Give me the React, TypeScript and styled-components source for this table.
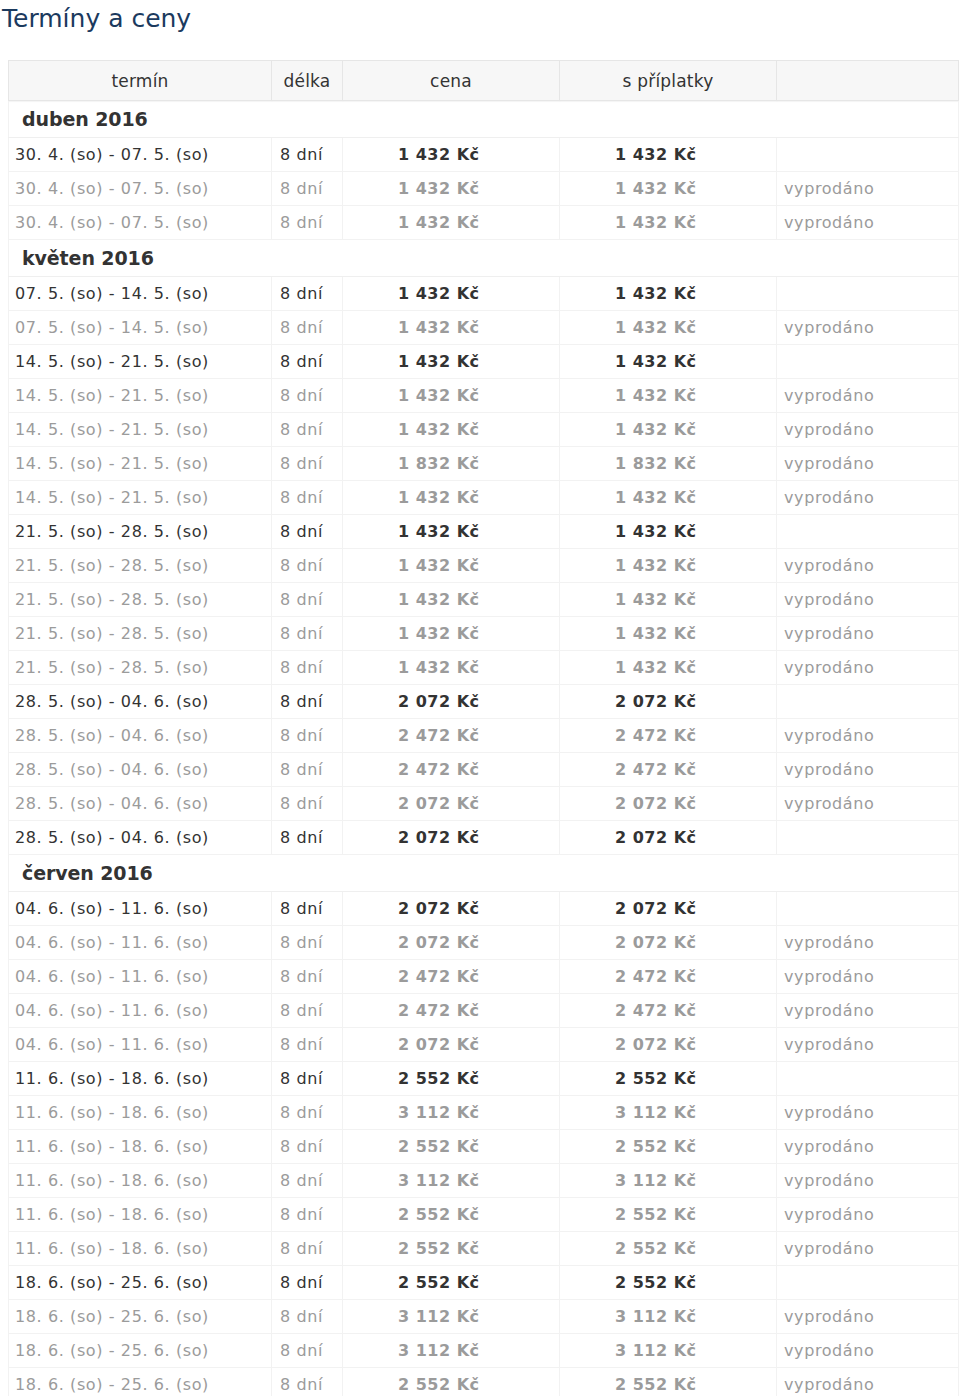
import React from "react";
import styled, { createGlobalStyle } from "styled-components";

const GlobalStyle = createGlobalStyle`
  body {
    margin: 0;
    background: #fff;
    font-family: "DejaVu Sans", Verdana, sans-serif;
  }
`;

const Page = styled.div`
  padding: 0 0 20px;
`;

const Title = styled.h2`
  margin: 0;
  padding-left: 2px;
  height: 37px;
  line-height: 37px;
  font-size: 25px;
  font-weight: normal;
  color: #1b3a5e;
`;

const Table = styled.table`
  margin: 23px 0 0 8px;
  width: 950px;
  border-collapse: collapse;
  table-layout: fixed;
  font-size: 16px;
  letter-spacing: 0.6px;
`;

const HeadCell = styled.th<{ $w: number }>`
  width: ${(p) => p.$w}px;
  height: 40px;
  padding: 0;
  box-sizing: border-box;
  background: #f7f7f7;
  border: 1px solid #e6e6e6;
  box-shadow: 0 1px 1px rgba(0, 0, 0, 0.04);
  font-size: 17px;
  font-weight: normal;
  letter-spacing: 0.2px;
  color: #333;
  text-align: center;
`;

const MonthCell = styled.td`
  height: 37px;
  padding: 0 0 0 13px;
  box-sizing: border-box;
  border-left: 1px solid #f2f2f2;
  border-right: 1px solid #f2f2f2;
  border-bottom: 1px solid #efefef;
  font-size: 19px;
  font-weight: bold;
  letter-spacing: -0.1px;
  color: #333;
`;

const Row = styled.tr<{ $sold: boolean }>`
  color: ${(p) => (p.$sold ? "#9b9b9b" : "#333")};
`;

const Cell = styled.td<{ $pad?: number; $bold?: boolean }>`
  height: 34px;
  padding: 0 0 0 ${(p) => p.$pad ?? 8}px;
  box-sizing: border-box;
  border: 1px solid #f2f2f2;
  white-space: nowrap;
  font-weight: ${(p) => (p.$bold ? "bold" : "normal")};
  letter-spacing: ${(p) => (p.$bold ? "0.5px" : "inherit")};
`;

type Term = { from: string; to: string; price: number; sold: boolean };
type Month = { name: string; terms: Term[] };

const t = (from: string, to: string, price: number, sold: boolean): Term => ({
  from,
  to,
  price,
  sold,
});

const months: Month[] = [
  {
    name: "duben 2016",
    terms: [
      t("30. 4.", "07. 5.", 1432, false),
      t("30. 4.", "07. 5.", 1432, true),
      t("30. 4.", "07. 5.", 1432, true),
    ],
  },
  {
    name: "květen 2016",
    terms: [
      t("07. 5.", "14. 5.", 1432, false),
      t("07. 5.", "14. 5.", 1432, true),
      t("14. 5.", "21. 5.", 1432, false),
      t("14. 5.", "21. 5.", 1432, true),
      t("14. 5.", "21. 5.", 1432, true),
      t("14. 5.", "21. 5.", 1832, true),
      t("14. 5.", "21. 5.", 1432, true),
      t("21. 5.", "28. 5.", 1432, false),
      t("21. 5.", "28. 5.", 1432, true),
      t("21. 5.", "28. 5.", 1432, true),
      t("21. 5.", "28. 5.", 1432, true),
      t("21. 5.", "28. 5.", 1432, true),
      t("28. 5.", "04. 6.", 2072, false),
      t("28. 5.", "04. 6.", 2472, true),
      t("28. 5.", "04. 6.", 2472, true),
      t("28. 5.", "04. 6.", 2072, true),
      t("28. 5.", "04. 6.", 2072, false),
    ],
  },
  {
    name: "červen 2016",
    terms: [
      t("04. 6.", "11. 6.", 2072, false),
      t("04. 6.", "11. 6.", 2072, true),
      t("04. 6.", "11. 6.", 2472, true),
      t("04. 6.", "11. 6.", 2472, true),
      t("04. 6.", "11. 6.", 2072, true),
      t("11. 6.", "18. 6.", 2552, false),
      t("11. 6.", "18. 6.", 3112, true),
      t("11. 6.", "18. 6.", 2552, true),
      t("11. 6.", "18. 6.", 3112, true),
      t("11. 6.", "18. 6.", 2552, true),
      t("11. 6.", "18. 6.", 2552, true),
      t("18. 6.", "25. 6.", 2552, false),
      t("18. 6.", "25. 6.", 3112, true),
      t("18. 6.", "25. 6.", 3112, true),
      t("18. 6.", "25. 6.", 2552, true),
    ],
  },
];

const formatPrice = (n: number) => {
  const s = String(n);
  return `${s.slice(0, s.length - 3)}\u00a0${s.slice(-3)}\u00a0Kč`;
};

export default function App() {
  return (
    <Page>
      <GlobalStyle />
      <Title>Termíny a ceny</Title>
      <Table>
        <thead>
          <tr>
            <HeadCell $w={263}>termín</HeadCell>
            <HeadCell $w={71}>délka</HeadCell>
            <HeadCell $w={217}>cena</HeadCell>
            <HeadCell $w={217}>s příplatky</HeadCell>
            <HeadCell $w={182}></HeadCell>
          </tr>
        </thead>
        <tbody>
          {months.map((m) => (
            <React.Fragment key={m.name}>
              <tr>
                <MonthCell colSpan={5}>{m.name}</MonthCell>
              </tr>
              {m.terms.map((term, i) => (
                <Row key={i} $sold={term.sold}>
                  <Cell $pad={6}>
                    {term.from} (so) - {term.to} (so)
                  </Cell>
                  <Cell $pad={8}>8 dní</Cell>
                  <Cell $pad={55} $bold>
                    {formatPrice(term.price)}
                  </Cell>
                  <Cell $pad={55} $bold>
                    {formatPrice(term.price)}
                  </Cell>
                  <Cell $pad={7}>{term.sold ? "vyprodáno" : ""}</Cell>
                </Row>
              ))}
            </React.Fragment>
          ))}
        </tbody>
      </Table>
    </Page>
  );
}
